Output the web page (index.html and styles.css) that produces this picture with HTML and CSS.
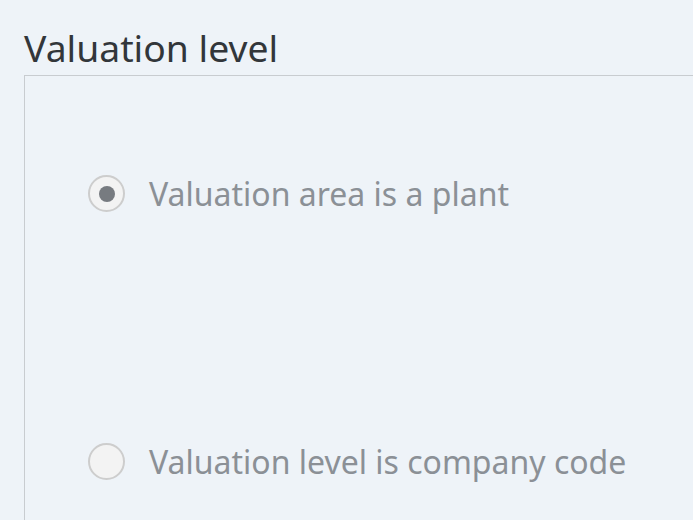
FILE: index.html
```html
<!DOCTYPE html>
<html lang="en">
<head>
<meta charset="utf-8">
<title>Valuation level</title>
<link rel="stylesheet" href="styles.css">
</head>
<body>
<section class="group">
  <h2 class="group-title">Valuation level</h2>
  <div class="group-box" role="radiogroup">
    <label class="option">
      <span class="radio radio-checked"><span class="radio-dot"></span></span>
      <span class="option-text">Valuation area is a plant</span>
    </label>
    <label class="option">
      <span class="radio"></span>
      <span class="option-text">Valuation level is company code</span>
    </label>
  </div>
</section>
</body>
</html>
```
FILE: styles.css
```css
html, body {
  margin: 0;
  padding: 0;
  height: 100%;
  overflow: hidden;
}
body {
  background: #eef3f8;
  font-family: "Noto Sans", "Open Sans", sans-serif;
}
.group {
  box-sizing: border-box;
  height: 100%;
  padding: 26px 0 0 24px;
  display: flex;
  flex-direction: column;
}
.group-title {
  margin: 0;
  font-size: 37.3px;
  font-weight: 400;
  line-height: 44px;
  color: #32363a;
  height: 49px;
  flex: none;
}
.group-box {
  flex: 1;
  border-top: 1px solid #c8ccd0;
  border-left: 1px solid #c8ccd0;
  padding: 99px 0 0 63px;
  display: flex;
  flex-direction: column;
  gap: 231px;
}
.option {
  display: flex;
  align-items: center;
  gap: 24px;
}
.radio {
  box-sizing: border-box;
  width: 37px;
  height: 37px;
  border-radius: 50%;
  border: 2px solid #cdcdcd;
  background: #f3f3f3;
  display: flex;
  align-items: center;
  justify-content: center;
  flex: none;
}
.radio-dot {
  width: 16px;
  height: 16px;
  border-radius: 50%;
  background: #777b80;
}
.option-text {
  font-size: 32px;
  line-height: 37px;
  color: #8b9096;
}
```
